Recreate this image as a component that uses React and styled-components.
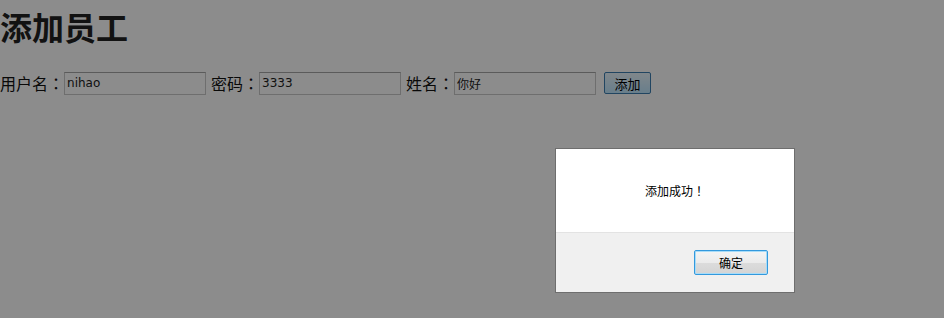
import React, { useState } from 'react';
import styled, { createGlobalStyle } from 'styled-components';

const GlobalStyle = createGlobalStyle`
  html, body {
    margin: 0;
    padding: 0;
    background: #ffffff;
    font-family: "Noto Sans CJK SC", "Liberation Sans", sans-serif;
    color: #000;
  }
`;

const Page = styled.div`
  width: 944px;
  height: 318px;
`;

const Title = styled.h1`
  margin: 6px 0 0;
  font-size: 32px;
  line-height: 40px;
  font-weight: bold;
  color: #222;
`;

const Form = styled.form`
  display: flex;
  align-items: center;
  margin-top: 25px;
  height: 24px;
`;

const Label = styled.label`
  display: flex;
  align-items: center;
  font-size: 16px;
  line-height: 24px;
  color: #111;
  margin-left: ${(p) => (p.first ? '0' : '5px')};
`;

// centred full-width punctuation, as the TC cut draws it
const Punct = styled.span`
  font-family: "Noto Sans CJK TC", "Noto Sans CJK SC", sans-serif;
`;

const Input = styled.input`
  box-sizing: border-box;
  width: 142px;
  height: 23px;
  margin: 0;
  padding: 0 2px;
  border: 1px solid #c8c8c8;
  border-top-color: #a6a6a6;
  background: #fff;
  font-family: "DejaVu Sans", "Noto Sans CJK SC", sans-serif;
  font-size: 12px;
  color: #222;
  outline: none;
`;

const AddButton = styled.button`
  box-sizing: border-box;
  width: 47px;
  height: 22px;
  margin-left: 8px;
  padding: 0;
  border: 1px solid #3c7fb1;
  border-radius: 2px;
  background: linear-gradient(#eaf6fd, #bee6fd);
  font-family: "Noto Sans CJK SC", sans-serif;
  font-size: 13px;
  color: #000;
`;

const Overlay = styled.div`
  position: fixed;
  inset: 0;
  background: rgba(0, 0, 0, 0.45);
`;

const Dialog = styled.div`
  position: absolute;
  left: 555px;
  top: 148px;
  width: 240px;
  box-sizing: border-box;
  border: 1px solid #6e6e6e;
  background: #fff;
  display: flex;
  flex-direction: column;
`;

const DialogBody = styled.div`
  height: 83px;
  display: flex;
  align-items: center;
  justify-content: center;
  font-size: 12px;
  color: #000;
`;

const DialogFooter = styled.div`
  height: 59px;
  border-top: 1px solid #e3e3e3;
  background: #f0f0f0;
  display: flex;
  align-items: center;
  justify-content: flex-end;
  padding-right: 26px;
`;

const OkButton = styled.button`
  box-sizing: border-box;
  width: 74px;
  height: 25px;
  padding: 0;
  border: 1px solid #3399dd;
  border-radius: 2px;
  box-shadow: inset 0 0 0 1px #a8dcf8;
  background: linear-gradient(#f4f4f4 0%, #ebebeb 50%, #dcdcdc 51%, #d4d4d4 100%);
  font-family: "Noto Sans CJK SC", sans-serif;
  font-size: 12px;
  color: #000;
`;

export default function App() {
  const [username, setUsername] = useState('nihao');
  const [password, setPassword] = useState('3333');
  const [name, setName] = useState('你好');

  return (
    <React.Fragment>
      <GlobalStyle />
      <Page>
        <Title>添加员工</Title>
        <Form onSubmit={(e) => e.preventDefault()}>
          <Label first>
            用户名<Punct>：</Punct>
            <Input value={username} onChange={(e) => setUsername(e.target.value)} />
          </Label>
          <Label>
            密码<Punct>：</Punct>
            <Input value={password} onChange={(e) => setPassword(e.target.value)} />
          </Label>
          <Label>
            姓名<Punct>：</Punct>
            <Input value={name} onChange={(e) => setName(e.target.value)} />
          </Label>
          <AddButton type="submit">添加</AddButton>
        </Form>
      </Page>
      <Overlay>
        <Dialog>
          <DialogBody>
            添加成功<Punct>！</Punct>
          </DialogBody>
          <DialogFooter>
            <OkButton>确定</OkButton>
          </DialogFooter>
        </Dialog>
      </Overlay>
    </React.Fragment>
  );
}
